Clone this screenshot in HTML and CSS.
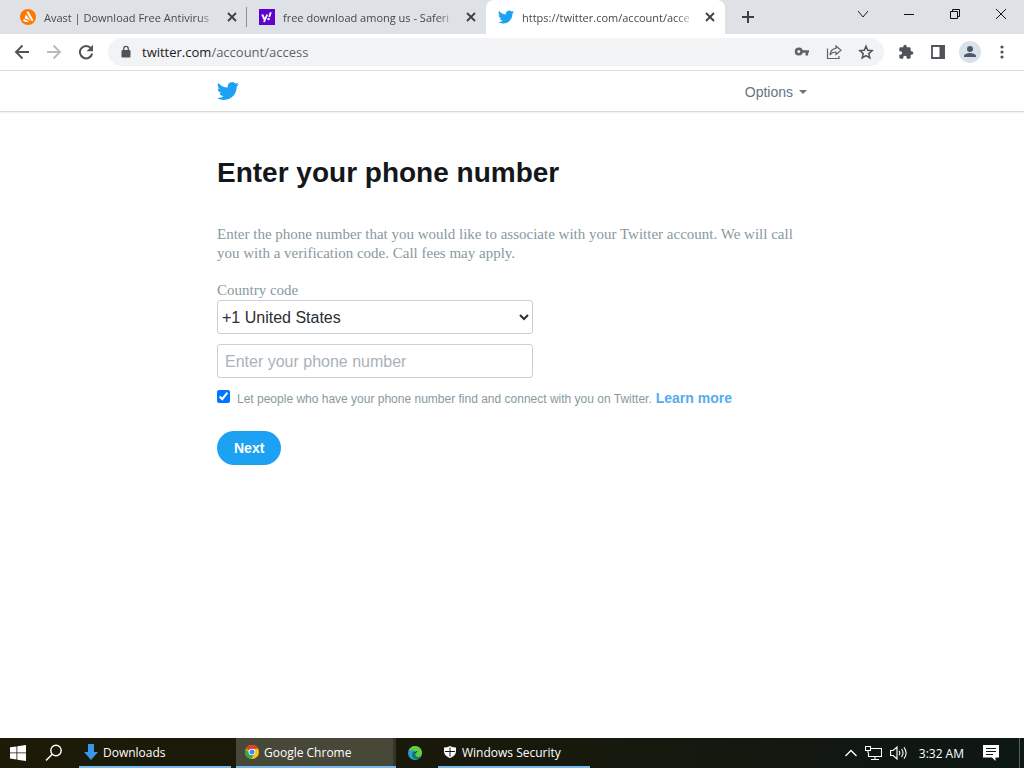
FILE: index.html
```html
<!doctype html>
<html lang="en">
<head>
    <meta charset="UTF-8">
    <meta name="viewport" content="width=device-width, initial-scale=1.0">
    <title>Twitter / Account access</title>
    <link rel="stylesheet" href="styles.css">
</head>
<body>
<svg class="defs" aria-hidden="true">
    <symbol id="bird" viewBox="0 0 24 24">
        <path d="M23.95 4.57a10 10 0 0 1-2.82.78 4.96 4.96 0 0 0 2.16-2.73 9.9 9.9 0 0 1-3.12 1.19 4.92 4.92 0 0 0-8.39 4.48A13.98 13.98 0 0 1 1.64 3.16a4.92 4.92 0 0 0 1.52 6.57 4.9 4.9 0 0 1-2.23-.61v.06a4.92 4.92 0 0 0 3.95 4.83 5 5 0 0 1-2.21.08 4.94 4.94 0 0 0 4.6 3.42A9.87 9.87 0 0 1 0 19.54a13.99 13.99 0 0 0 7.55 2.21c9.05 0 14-7.5 14-13.98 0-.21 0-.42-.02-.63a9.94 9.94 0 0 0 2.46-2.55z" fill="#1da1f2"/>
    </symbol>
    <symbol id="cross" viewBox="0 0 12 12">
        <path d="M2 2l8 8M10 2l-8 8" stroke="#3c4043" stroke-width="1.8"/>
    </symbol>
</svg>

<!-- browser tabs -->
<div class="tabs">
    <div class="tab">
        <svg class="favicon" viewBox="0 0 16 16"><circle cx="8" cy="8" r="8" fill="#ff7800"/><path d="M6.600 3.400c.6-1.100 1.900-1.100 2.500 0l3.900 7.200c.5 1-.3 1.900-1.300 1.500z" fill="#fff"/><path d="M5.800 5.600l4.900 6.200-6-2.600z" fill="#fff"/><path d="M4.200 9.900l4.600 2.600c-1.100.7-2.400.8-3.600.3-1-.4-1.700-.9-2.400-1.600z" fill="#fff"/></svg>
        <span class="tab-title">Avast | Download Free Antivirus</span>
        <button class="tab-close" aria-label="Close tab"><svg viewBox="0 0 12 12"><use href="#cross"/></svg></button>
    </div>
    <div class="tab">
        <svg class="favicon" viewBox="0 0 16 16"><rect width="16" height="16" fill="#5f01d1"/><path d="M3.200 5.500l2.400 5M8.200 5.500L5 13M11.800 3.200L10.200 8" stroke="#fff" stroke-width="1.900" fill="none"/><circle cx="9.600" cy="10" r="1.200" fill="#fff"/></svg>
        <span class="tab-title">free download among us - Saferi</span>
        <button class="tab-close" aria-label="Close tab"><svg viewBox="0 0 12 12"><use href="#cross"/></svg></button>
    </div>
    <div class="tab active">
        <svg class="favicon"><use href="#bird"/></svg>
        <span class="tab-title">https://twitter.com/account/acce</span>
        <button class="tab-close" aria-label="Close tab"><svg viewBox="0 0 12 12"><use href="#cross"/></svg></button>
    </div>
    <button class="new-tab" aria-label="New tab"><svg width="14" height="14" viewBox="0 0 14 14"><path d="M7 1v12M1 7h12" stroke="#3c4043" stroke-width="2"/></svg></button>
    <div class="window-buttons">
        <button aria-label="Search tabs"><svg width="12" height="12" viewBox="0 0 12 12"><path d="M1 3l5 6 5-6" fill="none" stroke="#222"/></svg></button>
        <button aria-label="Minimize"><svg width="10" height="10" viewBox="0 0 10 10"><path d="M0 5.500h10" stroke="#111"/></svg></button>
        <button aria-label="Restore"><svg width="10" height="10" viewBox="0 0 10 10"><path d="M.5 2.500h7v7h-7zM2.500 2.500v-2h7v7h-2" fill="none" stroke="#111"/></svg></button>
        <button aria-label="Close"><svg width="12" height="12" viewBox="0 0 12 12"><path d="M1 1l10 10M11 1L1 11" stroke="#111"/></svg></button>
    </div>
</div>

<!-- address bar -->
<div class="toolbar">
    <button class="tool" aria-label="Back"><svg viewBox="0 0 16 16"><path d="M15 8H2.500M8.500 1.500L2 8l6.500 6.500" fill="none" stroke="#505357" stroke-width="1.900"/></svg></button>
    <button class="tool" aria-label="Forward"><svg viewBox="0 0 16 16"><path d="M1 8h12.500M7.500 1.500L14 8l-6.500 6.500" fill="none" stroke="#b9bbbe" stroke-width="1.900"/></svg></button>
    <button class="tool" aria-label="Reload"><svg viewBox="0 0 16 16"><path d="M13 4.300A6.200 6.200 0 1 0 14.200 9.500" fill="none" stroke="#505357" stroke-width="2"/><path d="M15 .8v6.400H8.600z" fill="#505357"/></svg></button>
    <div class="omnibox">
        <svg class="lock" viewBox="0 0 10 14"><rect x=".5" y="5" width="9" height="7.500" rx="1" fill="#505357"/><path d="M2.700 5V3.700a2.300 2.300 0 0 1 4.600 0V5" fill="none" stroke="#505357" stroke-width="1.300"/></svg>
        <div class="url" role="textbox" aria-label="Address">twitter.com<span>/account/access</span></div>
        <button class="tool" aria-label="Passwords"><svg viewBox="0 0 16 16"><circle cx="4.800" cy="7.500" r="2.800" fill="none" stroke="#5f6368" stroke-width="2.600"/><path d="M7.500 7.500H15M12.800 7.500v4" stroke="#5f6368" stroke-width="2.600"/></svg></button>
        <button class="tool" aria-label="Share"><svg viewBox="0 0 16 16"><path d="M1.500 4.500v10h11.500V12" fill="none" stroke="#5f6368" stroke-width="1.200"/><path d="M10 2l5 4.200-5 4.200V8c-2.500 0-4.500.8-6 3 .4-4 2.600-6.300 6-6.600z" fill="none" stroke="#5f6368" stroke-width="1.200"/></svg></button>
        <button class="tool" aria-label="Bookmark"><svg viewBox="0 0 16 16"><path d="M8 2.200l1.700 4.100 4.400.4-3.300 2.900 1 4.300L8 11.600l-3.800 2.300 1-4.300-3.300-2.900 4.400-.4z" fill="none" stroke="#505357" stroke-width="1.500"/></svg></button>
    </div>
    <button class="tool" aria-label="Extensions"><svg viewBox="0 0 24 24"><path d="M20.500 11H19V7a2 2 0 0 0-2-2h-4V3.500a2.500 2.500 0 0 0-5 0V5H4a2 2 0 0 0-2 2v3.800h1.500a2.700 2.700 0 0 1 0 5.400H2V20c0 1.100.9 2 2 2h3.800v-1.500a2.700 2.700 0 0 1 5.400 0V22H17a2 2 0 0 0 2-2v-4h1.500a2.500 2.500 0 0 0 0-5z" fill="#505357"/></svg></button>
    <button class="tool" aria-label="Side panel"><svg viewBox="0 0 16 16"><path d="M2 2h12v12H2z" fill="none" stroke="#505357" stroke-width="1.800"/><path d="M9.500 1.500h5v13h-5z" fill="#505357"/></svg></button>
    <button class="tool profile" aria-label="Profile"><svg viewBox="0 0 22 22"><circle cx="11" cy="11" r="11" fill="#dbe1e8"/><circle cx="11" cy="8" r="3" fill="#4b5a68"/><path d="M5 16v-1c0-2 4-3 6-3s6 1 6 3v1z" fill="#4b5a68"/></svg></button>
    <button class="tool" aria-label="Menu"><svg viewBox="0 0 16 16" fill="#505357"><circle cx="8" cy="3" r="1.600"/><circle cx="8" cy="8" r="1.600"/><circle cx="8" cy="13" r="1.600"/></svg></button>
</div>

<header class="topbar">
    <div class="container">
        <a href="#" aria-label="Twitter"><svg class="logo"><use href="#bird"/></svg></a>
        <button class="options">Options <span class="caret"></span></button>
    </div>
</header>

<main class="container">
    <h1>Enter your phone number</h1>
    <p>Enter the phone number that you would like to associate with your Twitter account. We will call you with a verification code. Call fees may apply.</p>
    <form>
        <label class="country" for="country">Country code</label>
        <select id="country">
            <option>+1 United States</option>
        </select>
        <input class="phone" type="tel" placeholder="Enter your phone number" aria-label="Enter your phone number">
        <div class="discover">
            <input type="checkbox" id="discover" checked>
            <label for="discover">Let people who have your phone number find and connect with you on Twitter.</label>
            <a href="#">Learn more</a>
        </div>
        <button class="next" type="button">Next</button>
    </form>
</main>

<!-- windows taskbar -->
<footer class="taskbar">
    <button class="start" aria-label="Start"><svg width="16" height="16" viewBox="0 0 16 16" fill="#fff"><path d="M0 2.300l6.500-.9v6.100H0zM7.300 1.300L16 0v7.500H7.300zM0 8.300h6.500v6.200L0 13.600zM7.300 8.300H16V16l-8.700-1.300z"/></svg></button>
    <button class="search" aria-label="Search"><svg width="18" height="18" viewBox="0 0 18 18"><circle cx="11" cy="6.500" r="5.200" fill="none" stroke="#fff" stroke-width="1.400"/><path d="M7.200 10.300L1 16.500" stroke="#fff" stroke-width="1.500"/></svg></button>
    <button class="task open">
        <svg width="14" height="16" viewBox="0 0 14 16"><path d="M4 0h6v8h4l-7 8-7-8h4z" fill="#3a96e8"/></svg>
        Downloads
    </button>
    <button class="task open current">
        <svg width="14" height="14" viewBox="0 0 14 14"><circle cx="7" cy="7" r="7" fill="#fbc116"/><path d="M7 7L.9 3.500A7 7 0 0 1 13.100 3.800L7 4z" fill="#e33b2e"/><path d="M.9 3.500A7 7 0 0 0 6.300 14L9.500 8.500 4.500 8.800z" fill="#2da94f"/><circle cx="7" cy="7" r="3.300" fill="#fff"/><circle cx="7" cy="7" r="2.500" fill="#4285f4"/></svg>
        Google Chrome
    </button>
    <button class="edge" aria-label="Microsoft Edge"><svg width="14" height="14" viewBox="0 0 14 14"><circle cx="7" cy="7" r="7" fill="#2a9fd6"/><path d="M.5 4.500C2 1.500 4.500 0 7 0c4 0 7 3 7 6.800 0 2.700-2 4-4 4-1.700 0-2.500-.9-1.600-2C9.500 6.500 6 3 .5 4.500z" fill="#63cf3a"/><path d="M4.500 6.500C3 10 5.500 13.300 9.300 13.600c1.700-.6 2.800-1.600 3.700-3-3 1.500-6.300.5-6.200-2.800.1-1 .6-1.600 1.200-2-1.400-.8-2.900-.4-3.500.7z" fill="#147a50"/><path d="M7.200 7.200q.3-1.700 2-1.500" fill="none" stroke="#14301c"/></svg></button>
    <button class="task open security">
        <svg width="12" height="12" viewBox="0 0 12 12"><path d="M6 0c2 1 4 1.500 6 1.500V5c0 3.500-2.500 5.700-6 7C2.500 10.700 0 8.500 0 5V1.500C2 1.500 4 1 6 0z" fill="#fff"/><path d="M6 1.500v9M1 5.500h10" stroke="#17180f"/></svg>
        Windows Security
    </button>
    <div class="tray">
        <button aria-label="Hidden icons"><svg width="12" height="8" viewBox="0 0 12 8"><path d="M.5 7L6 1.500 11.500 7" fill="none" stroke="#fff" stroke-width="1.300"/></svg></button>
        <button aria-label="Network"><svg width="17" height="14" viewBox="0 0 17 14"><path d="M6 2.500h10.500v8H3.500V7M10 10.500v3M6 13.500h8M.5.500h5v4h-5zM3 4.500V7" fill="none" stroke="#fff" stroke-width="1.100"/></svg></button>
        <button aria-label="Volume"><svg width="17" height="14" viewBox="0 0 17 14"><path d="M.6 4.500h2.600L7 1v12L3.200 9.500H.6zM9 4.700q1.600 2.300 0 4.600M11.500 3q3 4 0 8M14 1.300q4.200 5.700 0 11.400" fill="none" stroke="#fff" stroke-width="1.100"/></svg></button>
        <time>3:32 AM</time>
        <button class="notes" aria-label="Notifications"><svg width="16" height="16" viewBox="0 0 16 16"><path d="M0 0h16v12.500h-3.500V16L9 12.500H0z" fill="#fff"/><path d="M3 3.500h10M3 6.500h10M3 9.500h7" stroke="#101713"/></svg></button>
    </div>
</footer>
</body>
</html>
```
FILE: styles.css
```css
* {
    box-sizing: border-box;
}
body {
    margin: 0;
    min-height: 100vh;
    display: flex;
    flex-direction: column;
    background: #fff;
    font-family: "Liberation Sans", Arial, sans-serif;
}
button {
    margin: 0;
    padding: 0;
    border: 0;
    background: none;
    font: inherit;
    color: inherit;
    cursor: pointer;
}
svg {
    display: block;
    flex: none;
}
.defs {
    display: none;
}

/* tabs */
.tabs {
    display: flex;
    height: 34px;
    padding-left: 8px;
    background: #dee1e6;
    font-family: "Open Sans", "Noto Sans", sans-serif;
    font-size: 11px;
    color: #45494d;
}
.tab {
    display: flex;
    align-items: center;
    flex: 0 1 239px;
    min-width: 0;
    padding: 0 8px 0 12px;
    border-right: 1px solid transparent;
}
.tab:first-child {
    border-image: linear-gradient(transparent 8px, #8b8f94 8px, #8b8f94 26px, transparent 26px) 1;
}
.tab.active {
    background: #fff;
    border-radius: 8px 8px 0 0;
}
.favicon {
    width: 16px;
    height: 16px;
    margin-right: 8px;
}
.tab-title {
    flex: 1;
    overflow: hidden;
    white-space: nowrap;
    -webkit-mask-image: linear-gradient(to left, transparent, #000 20px);
    mask-image: linear-gradient(to left, transparent, #000 20px);
}
.tab-close {
    width: 12px;
    height: 12px;
    margin-left: 8px;
}
.new-tab {
    padding: 0 16px;
}
.window-buttons {
    display: flex;
    margin-left: auto;
    padding-bottom: 6px;
}
.window-buttons button {
    display: flex;
    align-items: center;
    justify-content: center;
    width: 46px;
}

/* toolbar */
.toolbar {
    display: flex;
    align-items: center;
    height: 37px;
    padding: 0 6px;
    border-bottom: 1px solid #dadce0;
}
.tool {
    display: flex;
    align-items: center;
    justify-content: center;
    flex: none;
    width: 32px;
    height: 28px;
}
.tool svg {
    width: 16px;
    height: 16px;
}
.profile svg {
    width: 22px;
    height: 22px;
}
.omnibox {
    display: flex;
    align-items: center;
    flex: 1;
    height: 28px;
    margin: 0 6px;
    padding: 0 2px 0 13px;
    border-radius: 14px;
    background: #f1f3f4;
}
.lock {
    width: 10px;
    height: 14px;
}
.url {
    flex: 1;
    margin-left: 11px;
    font: 13px "Open Sans", "Noto Sans", sans-serif;
    color: #202124;
}
.url span {
    color: #5f6368;
}

/* page */
.container {
    width: 100%;
    max-width: 590px;
    margin: 0 auto;
}
.topbar {
    border-bottom: 1px solid #d9d9d9;
    box-shadow: 0 1px 1px #f2f2f2;
}
.topbar .container {
    display: flex;
    align-items: center;
    justify-content: space-between;
    height: 40px;
}
.logo {
    width: 22px;
    height: 22px;
}
.options {
    display: flex;
    align-items: center;
    gap: 6px;
    padding-top: 2px;
    font-size: 14px;
    color: #66757f;
}
.caret {
    border: 4px solid transparent;
    border-top-color: #66757f;
    border-bottom: 0;
}
main {
    flex: 1;
    padding-top: 43px;
}
h1 {
    margin: 0 0 34px;
    font-size: 28px;
    line-height: 36px;
    color: #14171a;
}
p,
.country {
    font: 15px/19px "Liberation Serif", "Times New Roman", serif;
    color: #8899a0;
}
p {
    margin: 0 0 18px;
}
.country {
    display: block;
}
select,
.phone {
    display: block;
    width: 316px;
    height: 34px;
    border: 1px solid #ccd0d3;
    border-radius: 3px;
    background: #fff;
    font: 16px "Liberation Sans", Arial, sans-serif;
    color: #292f33;
}
select {
    padding-right: 1px;
}
.phone {
    margin-top: 10px;
    padding: 2px 7px 0;
}
.phone::placeholder {
    color: #aab2b8;
}
.discover {
    display: flex;
    align-items: baseline;
    height: 20px;
    margin: 10px 0 23px;
    font-size: 12px;
    line-height: 20px;
    color: #8899a0;
}
.discover input {
    width: 13px;
    height: 13px;
    margin: 0 7px 0 0;
}
.discover a {
    margin-left: 4px;
    font-size: 14px;
    font-weight: bold;
    color: #55acee;
    text-decoration: none;
}
.next {
    height: 34px;
    padding: 0 17px;
    border-radius: 17px;
    background: #1da1f2;
    font-size: 14px;
    font-weight: bold;
    color: #fff;
}

/* taskbar */
.taskbar {
    display: flex;
    height: 30px;
    background: linear-gradient(to right, #1d1b07, #17190c 55%, #0d1714);
    font-family: "Open Sans", "Noto Sans", sans-serif;
    font-size: 12px;
    color: #fff;
}
.taskbar button {
    display: flex;
    align-items: center;
}
.start,
.search {
    justify-content: center;
    width: 36px;
}
.edge {
    justify-content: center;
    width: 38px;
}
.task {
    gap: 5px;
    width: 152px;
    margin-left: 7px;
    padding: 0 5px;
    border-bottom: 2px solid #76b9ed;
    white-space: nowrap;
}
.current {
    width: 160px;
    margin-left: 5px;
    padding: 0 9px;
    background: #484838;
    box-shadow: inset -3px 0 #35352a;
}
.security {
    gap: 6px;
    margin-left: 4px;
    padding: 0 6px;
}
.tray {
    display: flex;
    align-items: center;
    gap: 8px;
    margin-left: auto;
    margin-right: 4px;
    padding-right: 20px;
    border-right: 1px solid #55605c;
}
.tray time {
    margin: 0 11px 0 4px;
}
```
